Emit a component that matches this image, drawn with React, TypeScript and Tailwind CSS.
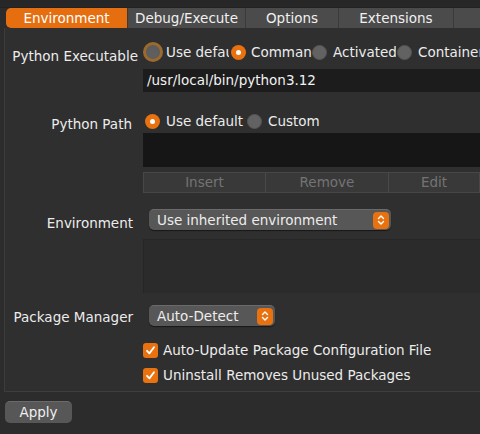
import React from 'react';

const font = { fontFamily: '"DejaVu Sans", "Liberation Sans", sans-serif' };

const Radio: React.FC<{ checked?: boolean; focused?: boolean }> = ({ checked, focused }) => {
  if (focused) {
    return (
      <span className="flex h-[20px] w-[20px] shrink-0 items-center justify-center rounded-full bg-[#9c6a2c]">
        <span className="block h-[14px] w-[14px] rounded-full bg-[#5f5f5f] shadow-inner" />
      </span>
    );
  }
  if (checked) {
    return (
      <span className="flex h-[15px] w-[15px] shrink-0 items-center justify-center rounded-full bg-[#e8720f]">
        <span className="block h-[5px] w-[5px] rounded-full bg-white" />
      </span>
    );
  }
  return <span className="block h-[15px] w-[15px] shrink-0 rounded-full border border-[#555] bg-[#626262]" />;
};

const Checkbox: React.FC = () => (
  <span className="flex h-[15px] w-[15px] shrink-0 items-center justify-center rounded-[3px] bg-[#e8720f]">
    <svg width="11" height="11" viewBox="0 0 11 11" fill="none">
      <path d="M2 5.8 L4.4 8.4 L9 2.2" stroke="white" strokeWidth="1.8" strokeLinecap="round" strokeLinejoin="round" />
    </svg>
  </span>
);

const Stepper: React.FC = () => (
  <span className="flex h-[17px] w-[16px] items-center justify-center rounded-[4px] bg-[#e8720f]">
    <svg width="8" height="12" viewBox="0 0 8 12" fill="none">
      <path d="M1.5 4.5 L4 2 L6.5 4.5 M1.5 7.5 L4 10 L6.5 7.5" stroke="white" strokeWidth="1.4" strokeLinecap="round" strokeLinejoin="round" />
    </svg>
  </span>
);

export default function App() {
  const tabs = [
    { name: 'Environment', w: 'w-[121px]' },
    { name: 'Debug/Execute', w: 'w-[118px]' },
    { name: 'Options', w: 'w-[93px]' },
    { name: 'Extensions', w: 'w-[115px]' },
  ];

  return (
    <div className="h-[434px] w-[480px] overflow-hidden bg-[#2c2c2c] text-[13.5px] text-[#ececec]" style={font}>
      <div className="h-[8px] border-b border-[#222] bg-[#272727]" />

      {/* tabs */}
      <div className="ml-[6px] flex h-[20px]">
        {tabs.map((t, i) => (
          <div
            key={t.name}
            className={
              i === 0
                ? `${t.w} flex items-center justify-center rounded-l-[5px] bg-[#e56f10] text-white`
                : `${t.w} flex items-center justify-center border-l border-[#3a3a3a] bg-[#4b4b4b] text-[#f0f0f0]`
            }
          >
            {t.name}
          </div>
        ))}
        <div className="flex-1 border-l border-[#3a3a3a] bg-[#4b4b4b]" />
      </div>

      {/* panel */}
      <div className="ml-[4px] flex h-[364px] flex-col border-b border-l border-[#3d3d3d] bg-[#2f2f2f]">
        <div className="mt-[14px] flex h-[20px] items-center">
          <div className="w-[133px] shrink-0 whitespace-nowrap pt-[9px] text-right">Python Executable</div>
          <div className="ml-[5px] flex flex-1 items-center overflow-hidden whitespace-nowrap">
            <div className="flex w-[86px] shrink-0 items-center gap-[3px] overflow-hidden">
              <Radio focused />
              <span>Use default</span>
            </div>
            <div className="flex w-[83px] shrink-0 items-center gap-[5px] overflow-hidden pl-[2px]">
              <Radio checked />
              <span>Command</span>
            </div>
            <div className="flex w-[84px] shrink-0 items-center gap-[6px] overflow-hidden">
              <Radio />
              <span>Activated</span>
            </div>
            <div className="flex flex-1 items-center gap-[6px] overflow-hidden pl-[1px]">
              <Radio />
              <span>Container</span>
            </div>
          </div>
        </div>

        <div className="ml-[138px] mt-[7px] flex h-[23px] items-center bg-[#1c1c1c] pl-[4px] text-[#f2f2f2]">
          /usr/local/bin/python3.12
        </div>

        <div className="mt-[19px] flex h-[20px] items-center">
          <div className="w-[127px] shrink-0 whitespace-nowrap pt-[6px] text-right">Python Path</div>
          <div className="ml-[13px] flex items-center whitespace-nowrap">
            <Radio checked />
            <span className="ml-[6px]">Use default</span>
            <span className="ml-[4px]">
              <Radio />
            </span>
            <span className="ml-[6px]">Custom</span>
          </div>
        </div>

        <div className="ml-[138px] mt-[2px] h-[34px] bg-[#161616]" />

        <div className="ml-[138px] mt-[5px] flex h-[21px] border border-[#474747] bg-[#393939] text-[#747474]">
          <div className="flex w-[122px] items-center justify-center border-r border-[#4a4a4a]">Insert</div>
          <div className="flex w-[123px] items-center justify-center border-r border-[#4a4a4a]">Remove</div>
          <div className="flex flex-1 items-center justify-center">Edit</div>
        </div>

        <div className="mt-[16px] flex h-[21px] items-center">
          <div className="w-[128px] shrink-0 whitespace-nowrap pt-[7px] text-right">Environment</div>
          <div className="ml-[16px] flex h-[21px] w-[242px] items-center justify-between rounded-[5px] border-t border-[#6a6a6a] bg-[#575757] pl-[8px] pr-[2px] shadow-[0_1px_1px_rgba(0,0,0,0.5)]">
            <span>Use inherited environment</span>
            <Stepper />
          </div>
        </div>

        <div className="ml-[138px] mt-[9px] h-[54px] border-l border-t border-[#262626] bg-[#2b2b2b]" />

        <div className="mt-[12px] flex h-[21px] items-center">
          <div className="w-[128px] shrink-0 whitespace-nowrap pt-[4px] text-right">Package Manager</div>
          <div className="ml-[16px] flex h-[21px] w-[126px] items-center justify-between rounded-[5px] border-t border-[#6a6a6a] bg-[#575757] pl-[8px] pr-[2px] shadow-[0_1px_1px_rgba(0,0,0,0.5)]">
            <span>Auto-Detect</span>
            <Stepper />
          </div>
        </div>

        <div className="ml-[138px] mt-[15px] flex h-[18px] items-center gap-[5px]">
          <Checkbox />
          <span>Auto-Update Package Configuration File</span>
        </div>
        <div className="ml-[138px] mt-[7px] flex h-[18px] items-center gap-[5px]">
          <Checkbox />
          <span>Uninstall Removes Unused Packages</span>
        </div>
      </div>

      <div className="ml-[5px] mt-[9px]">
        <button className="h-[22px] w-[67px] rounded-[5px] border-t border-[#6a6a6a] bg-[#575757] text-[#f0f0f0]">
          Apply
        </button>
      </div>
    </div>
  );
}
